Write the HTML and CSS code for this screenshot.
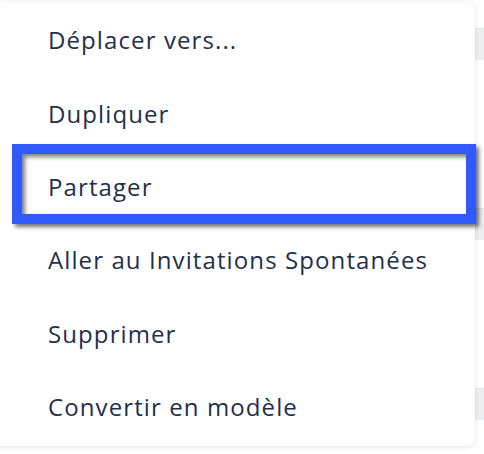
FILE: index.html
```html
<!DOCTYPE html>
<html lang="fr">
<head>
<meta charset="utf-8">
<link rel="stylesheet" href="styles.css">
</head>
<body>
<div class="backdrop">
  <div class="stripe"></div>
  <div class="stripe"></div>
  <div class="stripe"></div>
</div>
<ul class="menu">
  <li class="item">Déplacer vers...</li>
  <li class="item">Dupliquer</li>
  <li class="item">Partager</li>
  <li class="item">Aller au Invitations Spontanées</li>
  <li class="item">Supprimer</li>
  <li class="item">Convertir en modèle</li>
</ul>
<div class="highlight"></div>
</body>
</html>
```

FILE: styles.css
```css
html, body {
  margin: 0;
  padding: 0;
  background: #ffffff;
  width: 484px;
  height: 454px;
  overflow: hidden;
}
body {
  position: relative;
  font-family: "Open Sans", "Liberation Sans", sans-serif;
}
.backdrop {
  display: flex;
  flex-direction: column;
  gap: 148px;
  padding-top: 28px;
}
.stripe {
  height: 32px;
  background: #eceef1;
  border-top: 1px solid #e3e5e9;
  box-sizing: border-box;
}
.menu {
  position: absolute;
  left: -10px;
  top: 2px;
  width: 485px;
  height: 444px;
  margin: 0;
  padding: 1px 0 0 0;
  list-style: none;
  background: #ffffff;
  border-radius: 8px;
  box-shadow: 0 1px 5px rgba(30, 40, 60, 0.14);
  box-sizing: border-box;
  display: flex;
  flex-direction: column;
}
.item {
  height: 73.4px;
  display: flex;
  align-items: center;
  padding-left: 58px;
  font-size: 24px;
  color: #1f3049;
  letter-spacing: 1.1px;
  white-space: nowrap;
}
.highlight {
  position: absolute;
  left: 12px;
  top: 144px;
  width: 464px;
  height: 80px;
  box-sizing: border-box;
  border: 10px solid #3159fd;
  box-shadow: 3px 3px 4px rgba(0, 0, 0, 0.55), inset 3px 3px 4px rgba(0, 0, 0, 0.5);
}
```
